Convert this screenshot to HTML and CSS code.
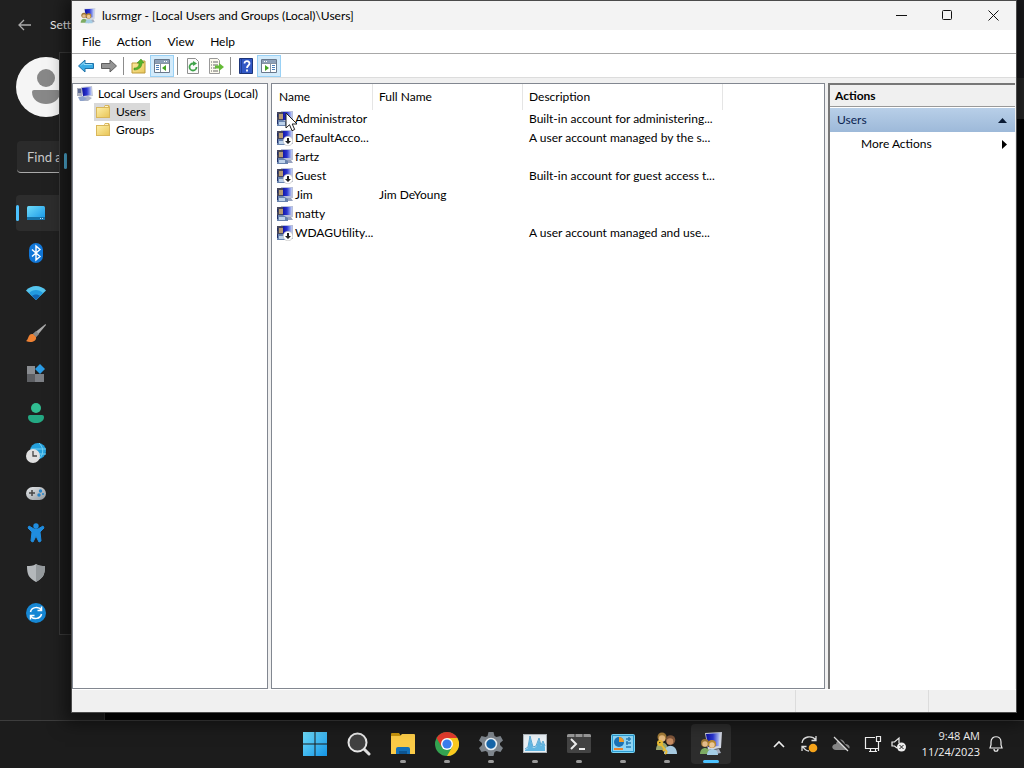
FILE: index.html
```html
<!DOCTYPE html>
<html lang="en">
<head>
    <meta charset="UTF-8">
    <meta name="viewport" content="width=device-width, initial-scale=1.0">
    <title>lusrmgr</title>
    <link rel="stylesheet" href="styles.css">
</head>
<body>
    <svg class="sprite" aria-hidden="true">
        <defs>
            <linearGradient id="gBlue" x1="0" y1="0" x2="1" y2="1"><stop offset="0" stop-color="#6fdcfa"/><stop offset="1" stop-color="#1494e6"/></linearGradient>
            <linearGradient id="gScreen" x1="0" y1="0" x2="1" y2="0"><stop offset="0" stop-color="#0d109c"/><stop offset=".5" stop-color="#2a35d0"/><stop offset="1" stop-color="#c4d4fa"/></linearGradient>
            <linearGradient id="gFolder" x1="0" y1="0" x2="1" y2="1"><stop offset="0" stop-color="#fdeea6"/><stop offset="1" stop-color="#e9c659"/></linearGradient>
            <linearGradient id="gSilver" x1="0" y1="0" x2="1" y2="1"><stop offset="0" stop-color="#e4e7ea"/><stop offset="1" stop-color="#92989d"/></linearGradient>
        </defs>
        <symbol id="computer" viewBox="0 0 16 16">
            <path d="M4 1l11-1 1 10-10 1z" fill="#c3c8d8"/>
            <path d="M5 2l9-1 .8 8L6 10z" fill="url(#gScreen)"/>
            <path d="M5 12l6-2 4 2-4 3H5z" fill="#aeb5c6"/>
            <path d="M0 2h5v8H0z" fill="#a9aebd"/>
            <path d="M1 3h3v4H1z" fill="#5d6a94"/>
            <path d="M1 11l5-1 4 3-4 2H3z" fill="#8ea3cc"/>
        </symbol>
        <symbol id="user" viewBox="0 0 16 16">
            <path d="M4 0h12v11H5z" fill="#b9c0da"/>
            <path d="M5 1h10l-1 8H6z" fill="url(#gScreen)"/>
            <path d="M8 11h6l2 3H8z" fill="#98a3bf"/>
            <path d="M0 1h6v8H0z" fill="#46475c"/>
            <path d="M2 3h4v5H2z" fill="#b69a72"/>
            <path d="M0 15V9h6l5 3v3z" fill="#6883ae"/>
            <path d="M2 11h6v3H2z" fill="#bdd2ea"/>
            <path d="M0 3h1v3H0zM0 9h1v4H0z" fill="#222f68"/>
        </symbol>
        <symbol id="user-off" viewBox="0 0 16 16">
            <use href="#user"/>
            <circle cx="11" cy="11" r="4.8" fill="#fff" stroke="#aaa" stroke-width=".5"/>
            <path d="M10 8h2v3h2l-3 3-3-3h2z" fill="#222"/>
        </symbol>
        <symbol id="group" viewBox="0 0 24 24">
            <path d="M6 1l17-1-1 16-13 2z" fill="#d0d5e2"/>
            <path d="M7 2l14-1-1 13-11 1z" fill="url(#gScreen)"/>
            <path d="M14 18l6-1 2 4-10 2z" fill="#a5adbd"/>
            <circle cx="6" cy="11" r="4" fill="#9a7435"/><circle cx="6" cy="12" r="2.7" fill="#e4bc8c"/>
            <path d="M1 22c0-8 10-8 10 0z" fill="#7dab62"/>
            <circle cx="13" cy="12" r="4" fill="#b8892f"/><circle cx="13" cy="13" r="2.7" fill="#ecc999"/>
            <path d="M8 23c0-8 11-8 11 0z" fill="#a5cde5"/>
        </symbol>
        <symbol id="folder" viewBox="0 0 16 16">
            <path d="M1 3h8l1-2h4l1 2v11H1z" fill="#d9b65a"/>
            <path d="M2 4h12v9H2z" fill="url(#gFolder)"/>
            <path d="M10 2h3v1h-3z" fill="#fff4c5"/>
        </symbol>
        <symbol id="pane" viewBox="0 0 16 14">
            <path d="M.5.5h15v13H.5z" fill="#fff" stroke="#69788b"/>
            <path d="M1 1h14v3H1z" fill="#8da0b8"/><path d="M10 2h1v1h-1zM12 2h1v1h-1z" fill="#fff"/>
            <path d="M6.500 4v9M1 4.500h14" stroke="#8794a3" fill="none"/>
            <path d="M2 6.500h3M2 8.500h3M2 10.500h3" stroke="#4c7fb8"/>
            <path d="M12 6v6L8 9z" fill="#43a523"/>
        </symbol>
    </svg>

    <div class="desktop">
        <div class="back-window"><div class="back-band"></div></div>

        <section class="settings">
            <header class="settings-head">
                <button aria-label="Back"><svg width="14" height="12" viewBox="0 0 14 12"><path d="M13 6H1M6 1L1 6l5 5" fill="none" stroke="#aaa" stroke-width="1.300"/></svg></button>
                <span>Sett</span>
            </header>
            <div class="avatar"><svg width="60" height="60" viewBox="0 0 60 60"><circle cx="30" cy="21" r="9" fill="#888"/><path d="M16 35q0-2 2-2h24q2 0 2 2c0 16-28 16-28 0z" fill="#888"/></svg></div>
            <input class="search" type="text" value="Find a" aria-label="Find a setting">
            <nav class="settings-nav">
                <a href="#" class="active" aria-label="System"><svg width="20" height="20" viewBox="0 0 20 20"><rect x="1" y="3" width="18" height="14" rx="1.500" fill="url(#gBlue)"/><path d="M1 14h18v1.500q0 1.500-1.500 1.500h-15Q1 17 1 15.500z" fill="#1572a8"/><path d="M14 15.500h1M16 15.500h1" stroke="#bdf"/></svg></a>
                <a href="#" aria-label="Bluetooth"><svg width="20" height="20" viewBox="0 0 20 20"><rect x="3" y="0" width="14" height="20" rx="7" fill="#1177d8"/><path d="M6 6.500l8 7-4 3.500V3l4 3.500-8 7" fill="none" stroke="#fff" stroke-width="1.400"/></svg></a>
                <a href="#" aria-label="Network"><svg width="20" height="20" viewBox="0 0 20 20"><path d="M0 7.500c5-6 15-6 20 0l-10 9.500z" fill="#55c5ee"/><path d="M3 10c4-4 10-4 14 0l-7 7z" fill="#229be0"/><path d="M6 13c2-2 6-2 8 0l-4 4z" fill="#1267b5"/></svg></a>
                <a href="#" aria-label="Personalization"><svg width="20" height="20" viewBox="0 0 20 20"><path d="M19.500 1L7 11l3 3L20 2z" fill="#aaa"/><path d="M10 8l-3 3 3 3 3-3z" fill="#888"/><path d="M7 11c-5-1-4 5-7 7 4 2 11 1 10-4z" fill="#ee8234"/></svg></a>
                <a href="#" aria-label="Apps"><svg width="20" height="20" viewBox="0 0 20 20"><path d="M1 3h8v8H1z" fill="#8a8d91"/><path d="M1 11h8v8H1z" fill="#5e6064"/><path d="M9 11h9v8H9z" fill="#7d8085"/><path d="M14 1l5 5-5 5-5-5z" fill="#2a9be4"/></svg></a>
                <a href="#" aria-label="Accounts"><svg width="20" height="20" viewBox="0 0 20 20"><circle cx="10" cy="5" r="5" fill="#30bd91"/><path d="M2 14q0-2 2-2h12q2 0 2 2c0 8-16 8-16 0z" fill="#24a983"/></svg></a>
                <a href="#" aria-label="Time"><svg width="20" height="20" viewBox="0 0 20 20"><circle cx="12" cy="8" r="8" fill="#24a0dc"/><path d="M5 6h15M6 11h14M13 0c5 5 5 11 0 16" fill="none" stroke="#75d0f2"/><circle cx="7" cy="13" r="7" fill="#e0e0e0"/><path d="M7 8v5h4" fill="none" stroke="#444" stroke-width="1.300"/></svg></a>
                <a href="#" aria-label="Gaming"><svg width="20" height="20" viewBox="0 0 20 20"><rect x="0" y="4" width="20" height="13" rx="6.500" fill="url(#gSilver)"/><path d="M6 7v6M3 10h6" stroke="#444" stroke-width="1.500"/><circle cx="14.500" cy="8" r="1.700" fill="#2784c8"/><circle cx="13" cy="12" r="1.700" fill="#2784c8"/><circle cx="17" cy="11" r="1" fill="#2784c8"/></svg></a>
                <a href="#" aria-label="Accessibility"><svg width="20" height="20" viewBox="0 0 20 20"><circle cx="10" cy="3" r="2.700" fill="#1f8de0"/><path d="M3 3l5 3h4l5-3 1 2-4 4 1 9-2 1-3-6-3 6-2-1 1-9-4-4z" fill="#1f8de0" stroke="#1f8de0"/></svg></a>
                <a href="#" aria-label="Privacy"><svg width="20" height="20" viewBox="0 0 20 20"><path d="M10 1c3 2 6 2 9 2 0 9-2 12-9 16C3 15 1 12 1 3c3 0 6 0 9-2z" fill="#b4b8bb"/><path d="M10 1c3 2 6 2 9 2 0 9-2 12-9 16z" fill="#94999c"/></svg></a>
                <a href="#" aria-label="Update"><svg width="20" height="20" viewBox="0 0 20 20"><circle cx="10" cy="10" r="10" fill="#1687d4"/><path d="M4.500 9c1-5 8-6 11-2M15.500 3.500V7.500h-4M15.500 11c-1 5-8 6-11 2M4.500 16.500v-4h4" fill="none" stroke="#fff" stroke-width="1.500"/></svg></a>
            </nav>
        </section>
        <div class="flyout"><div class="flyout-mark"></div></div>

        <main class="window">
            <header class="titlebar">
                <svg width="16" height="16"><use href="#group"/></svg>
                <h1>lusrmgr - [Local Users and Groups (Local)\Users]</h1>
                <div class="caption-btns">
                    <button aria-label="Minimize"><svg width="11" height="11"><path d="M0 5.500h11" stroke="#111"/></svg></button>
                    <button aria-label="Maximize"><svg width="11" height="11"><rect x=".5" y=".5" width="9" height="9" rx="1" fill="none" stroke="#111"/></svg></button>
                    <button aria-label="Close"><svg width="11" height="11"><path d="M.5.5l10 10M10.500.5l-10 10" stroke="#111"/></svg></button>
                </div>
            </header>
            <nav class="menubar">
                <button>File</button>
                <button>Action</button>
                <button>View</button>
                <button>Help</button>
            </nav>
            <div class="toolbar">
                <button aria-label="Back"><svg width="16" height="14" viewBox="0 0 16 14"><path d="M.5 7L7 1v3.500h8.500v5H7V13z" fill="#3aabe4" stroke="#2072a8"/><path d="M3 6.500l3-3v2h8" stroke="#96dcf8" fill="none"/></svg></button>
                <button aria-label="Forward"><svg width="16" height="14" viewBox="0 0 16 14"><path d="M15.500 7L9 1v3.500H.5v5H9V13z" fill="#949494" stroke="#5f5f5f"/></svg></button>
                <span class="sep"></span>
                <button aria-label="Up one level"><svg width="16" height="16" viewBox="0 0 16 16"><path d="M1 5h7l1-2h5v12H1z" fill="url(#gFolder)" stroke="#bd9a3b"/><path d="M3 10c4 0 5-2 5-5H6l4-4 3 4h-2c0 4-3 7-8 7z" fill="#55b52a" stroke="#3a871c" stroke-width=".5"/></svg></button>
                <button class="on" aria-label="Console tree"><svg width="16" height="14"><use href="#pane"/></svg></button>
                <span class="sep"></span>
                <button aria-label="Refresh"><svg width="16" height="16" viewBox="0 0 16 16"><path d="M2.500.5h8l3 3v12h-11z" fill="#fbfbfb" stroke="#909090"/><path d="M11.500 9A3.500 3.500 0 1 1 8 5.500" fill="none" stroke="#3fa34a" stroke-width="1.800"/><path d="M8 3l4 2.500L8 8z" fill="#3fa34a"/></svg></button>
                <button aria-label="Export list"><svg width="16" height="16" viewBox="0 0 16 16"><path d="M1.500.5h8l2 2v13h-10z" fill="#fcfaee" stroke="#999"/><path d="M3 4h1M3 7h1M3 10h1M3 13h1M5 4h5M5 7h5M5 10h3M5 13h5" stroke="#666"/><path d="M7 7.500h4V5l5 4-5 4v-2.500H7z" fill="#65bb37"/></svg></button>
                <span class="sep"></span>
                <button aria-label="Help"><svg width="14" height="16" viewBox="0 0 14 16"><path d="M.5.5h13v15H.5z" fill="#3158c5" stroke="#1d3578"/><path d="M2.500 1v14" stroke="#203f94"/><path d="M5.500 5.500c0-3.500 5-3 5 0 0 2-2.500 2-2.500 4.500M8 11.500v2" fill="none" stroke="#fff" stroke-width="1.800"/></svg></button>
                <button class="on" aria-label="Action pane"><svg class="flip" width="16" height="14"><use href="#pane"/></svg></button>
            </div>

            <div class="panes">
                <div class="tree">
                    <a href="#"><svg width="16" height="16"><use href="#computer"/></svg>Local Users and Groups (Local)</a>
                    <a href="#" class="leaf selected"><svg width="16" height="16"><use href="#folder"/></svg>Users</a>
                    <a href="#" class="leaf"><svg width="16" height="16"><use href="#folder"/></svg>Groups</a>
                </div>

                <div class="list">
                    <table>
                        <thead>
                            <tr><th class="col-name">Name</th><th class="col-full">Full Name</th><th class="col-desc">Description</th></tr>
                        </thead>
                        <tbody>
                            <tr><td><div class="name"><svg width="16" height="16"><use href="#user"/></svg>Administrator</div></td><td></td><td>Built-in account for administering...</td></tr>
                            <tr><td><div class="name"><svg width="16" height="16"><use href="#user-off"/></svg>DefaultAcco...</div></td><td></td><td>A user account managed by the s...</td></tr>
                            <tr><td><div class="name"><svg width="16" height="16"><use href="#user"/></svg>fartz</div></td><td></td><td></td></tr>
                            <tr><td><div class="name"><svg width="16" height="16"><use href="#user-off"/></svg>Guest</div></td><td></td><td>Built-in account for guest access t...</td></tr>
                            <tr><td><div class="name"><svg width="16" height="16"><use href="#user"/></svg>Jim</div></td><td>Jim DeYoung</td><td></td></tr>
                            <tr><td><div class="name"><svg width="16" height="16"><use href="#user"/></svg>matty</div></td><td></td><td></td></tr>
                            <tr><td><div class="name"><svg width="16" height="16"><use href="#user-off"/></svg>WDAGUtility...</div></td><td></td><td>A user account managed and use...</td></tr>
                        </tbody>
                    </table>
                </div>

                <aside class="actions">
                    <h2>Actions</h2>
                    <button class="group">Users<svg width="9" height="5"><path d="M0 5l4.500-5L9 5z" fill="#0a1a33"/></svg></button>
                    <button class="more">More Actions<svg width="5" height="9"><path d="M0 0l5 4.500L0 9z" fill="#000"/></svg></button>
                </aside>
            </div>
            <footer class="status"><span></span><span></span><span></span></footer>
        </main>

        <svg class="cursor" width="13" height="20" viewBox="0 0 13 20"><path d="M1 1v15l3.500-3.300 2.500 6 2.700-1.200L7.200 12H12z" fill="#fff" stroke="#222"/></svg>
    </div>

    <footer class="taskbar">
        <div class="apps">
            <button aria-label="Start"><svg width="24" height="24" viewBox="0 0 24 24"><path d="M0 0h11.500v11.500H0zM12.500 0H24v11.500H12.500zM0 12.500h11.500V24H0zM12.500 12.500H24V24H12.500z" fill="url(#gBlue)"/></svg></button>
            <button aria-label="Search"><svg width="24" height="24" viewBox="0 0 24 24"><path d="M16 16l6 6" stroke="#ddd" stroke-width="3" stroke-linecap="round"/><circle cx="10.500" cy="10.500" r="9" fill="#414141" stroke="#e6e6e6" stroke-width="2"/></svg></button>
            <button class="open" aria-label="File Explorer"><svg width="24" height="24" viewBox="0 0 24 24"><path d="M0 2q0-1 1-1h7l2 3H0z" fill="#c8940c"/><path d="M0 4h9l2-2h12q1 0 1 1v19H0z" fill="#fbcb47"/><path d="M5 22v-5q0-2 2-2h10q2 0 2 2v5z" fill="#1470b8"/><path d="M8 19h8v3H8z" fill="#0d5592"/></svg></button>
            <button class="open" aria-label="Chrome"><svg width="24" height="24" viewBox="0 0 24 24"><circle cx="12" cy="12" r="12" fill="#34a351"/><path d="M1.600 6A12 12 0 0 1 22.400 6L12 6 12 12 6.800 15z" fill="#e33b2e"/><path d="M22.400 6A12 12 0 0 1 12 24l5.200-9L12 6z" fill="#fbc91e"/><circle cx="12" cy="12" r="6" fill="#fff"/><circle cx="12" cy="12" r="4.600" fill="#3b7ded"/></svg></button>
            <button class="open" aria-label="Settings"><svg width="24" height="24" viewBox="0 0 24 24"><path d="M9.500 0h5l1 4 2 1 4-1L24 8.500 21 11v2l3 3-2.500 4-4-1-2 1-1 4h-5l-1-4-2-1-4 1L0 16l3-3v-2L0 8.500 2.500 4l4 1 2-1z" fill="#7e858c"/><circle cx="12" cy="12" r="5.500" fill="#1665a8" stroke="#e6edf2" stroke-width="1.600"/></svg></button>
            <button class="open" aria-label="Resource Monitor"><svg width="24" height="24" viewBox="0 0 24 24"><rect x=".5" y="2.500" width="23" height="18" fill="#e9f0f5" stroke="#aeb5ba"/><path d="M2 18l3-2 2-11 3 11 3-1 3-8 2 7 2-4 2 5v4H2z" fill="#61b6e2"/><path d="M2 17l3-2 2-11 3 11 3-1 3-8 2 7 2-4 2 5" fill="none" stroke="#58a8d4"/></svg></button>
            <button class="open" aria-label="Terminal"><svg width="24" height="24" viewBox="0 0 24 24"><rect y="2" width="24" height="19" rx="1.500" fill="#434343"/><path d="M0 5V3.500Q0 2 1.500 2h21Q24 2 24 3.500V5z" fill="#9a9a9a"/><path d="M8 2v3M16 2v3" stroke="#333"/><path d="M4 7l5 5-5 5" fill="none" stroke="#eee" stroke-width="2"/><path d="M12 17h6" stroke="#eee" stroke-width="2"/></svg></button>
            <button class="open" aria-label="Control Panel"><svg width="24" height="24" viewBox="0 0 24 24"><rect x=".5" y="2.500" width="23" height="18" rx="1" fill="#2d9cd2" stroke="#7cd5f4"/><rect x="2" y="4" width="20" height="15" fill="#8fd5f4"/><circle cx="8" cy="10" r="5" fill="#1b72b5"/><path d="M8 10V5a5 5 0 0 1 5 5z" fill="#f39b25"/><path d="M15 7h5M15 11h5M15 15h5M18 5v4M16 9v4" stroke="#2a7db5" stroke-width="1.500"/><path d="M3 17h9" stroke="#e9842f" stroke-width="2"/></svg></button>
            <button class="open" aria-label="User Accounts"><svg width="24" height="24" viewBox="0 0 24 24"><circle cx="7" cy="5" r="4.500" fill="#a37c38"/><circle cx="7" cy="6.500" r="3.200" fill="#e6bb80"/><path d="M1 18c0-10 12-10 12 0z" fill="#9aa872"/><circle cx="15.500" cy="8" r="4.800" fill="#7e553a"/><circle cx="15" cy="9.500" r="3.300" fill="#c78d62"/><path d="M9 22c0-11 13-11 13 0z" fill="#a6c9df"/><path d="M5 11l7 9M10 17l-2 2M12 20l-2 2" fill="none" stroke="#e9bb31" stroke-width="2"/><circle cx="5" cy="11" r="2" fill="none" stroke="#e9bb31" stroke-width="2"/></svg></button>
            <button class="open current" aria-label="Local Users and Groups"><svg width="24" height="24"><use href="#group"/></svg></button>
        </div>
        <div class="tray">
            <button class="spaced" aria-label="Show hidden icons"><svg width="14" height="16" viewBox="0 0 14 16"><path d="M2 11l5-5 5 5" fill="none" stroke="#eee" stroke-width="1.600"/></svg></button>
            <button class="spaced" aria-label="Sync"><svg width="18" height="18" viewBox="0 0 18 18"><path d="M2 8c1-7 10-8 14-3M16 1v4.500h-4.500M2 16v-4.500h4.500M3 12c2 3 4 4 6 4" fill="none" stroke="#ddd" stroke-width="1.300"/><circle cx="13" cy="13" r="4.300" fill="#f5a31a"/></svg></button>
            <button class="spaced" aria-label="OneDrive"><svg width="18" height="18" viewBox="0 0 18 18"><path d="M4 15c-5 0-5-6 0-6 1-6 8-6 9 0 6 0 6 6 1 6z" fill="#858585"/><path d="M3 1l14 14" stroke="#1c1c1c" stroke-width="2"/><path d="M2 2l14 14" stroke="#ddd" stroke-width="1.200"/></svg></button>
            <button aria-label="Network"><svg width="18" height="18" viewBox="0 0 18 18"><path d="M11 2.500H1.500v11h13V9M5 16.500h8M6.500 14v2M11.500 14v2M12.500 1.500h4v5h-4zM14.500 7v9" fill="none" stroke="#eee" stroke-width="1.200"/></svg></button>
            <button aria-label="Volume"><svg width="18" height="18" viewBox="0 0 18 18"><path d="M7 13L4.500 11H2V7h2.500L9 3v5" fill="none" stroke="#eee" stroke-width="1.200"/><circle cx="11.500" cy="12" r="4.500" fill="#eee"/><path d="M9.500 10l4 4M13.500 10l-4 4" stroke="#222"/></svg></button>
            <button class="clock">9:48 AM<br>11/24/2023</button>
            <button aria-label="Notifications"><svg width="16" height="18" viewBox="0 0 16 18"><path d="M2 13l1-3V7c0-7 10-7 10 0v3l1 3zM6 14c0 3 4 3 4 0" fill="none" stroke="#eee" stroke-width="1.200"/></svg></button>
        </div>
    </footer>
</body>
</html>
```

FILE: styles.css
```css
* {
    box-sizing: border-box;
}
body {
    margin: 0;
    height: 100vh;
    display: flex;
    flex-direction: column;
    overflow: hidden;
    background-color: #000;
    color: #000;
    font-family: Lato, "Open Sans", sans-serif;
    font-size: 12px;
    line-height: 18px;
}
button {
    border: 0;
    padding: 0;
    background: none;
    color: inherit;
    font: inherit;
}
a {
    color: inherit;
    text-decoration: none;
}
svg {
    display: block;
    flex: none;
}
.sprite {
    position: absolute;
    width: 0;
    height: 0;
}
.desktop {
    position: relative;
    flex: 1;
    background-color: #030303;
}

/* windows on the desktop */
.back-window {
    position: absolute;
    top: 0;
    right: 0;
    width: 40px;
    height: 119px;
    padding-top: 78px;
    background-color: #1b1b1e;
}
.back-band {
    height: 41px;
    background-color: #2b2b2b;
}
.settings {
    position: absolute;
    top: 0;
    bottom: 0;
    left: 0;
    width: 105px;
    padding-left: 16px;
    background-color: #202020;
    border-right: 1px solid #333;
    color: #eee;
}
.settings-head {
    display: flex;
    align-items: center;
    gap: 18px;
    height: 50px;
    padding-left: 2px;
}
.avatar {
    width: 60px;
    height: 60px;
    margin-top: 7px;
    border-radius: 50%;
    background-color: #f5f5f5;
}
.search {
    display: block;
    width: 80px;
    height: 32px;
    margin: 24px 0 22px 1px;
    padding: 0 10px;
    border: 0;
    border-bottom: 1px solid #aaa;
    border-radius: 4px;
    background-color: #2b2b2b;
    color: #c8c8c8;
    font: inherit;
    font-size: 13px;
}
.settings-nav a {
    display: flex;
    align-items: center;
    height: 36px;
    margin-bottom: 4px;
    padding-left: 10px;
    border-radius: 4px;
}
.settings-nav .active {
    padding-left: 0;
    background-color: #2d2d2d;
}
.settings-nav .active::before {
    content: "";
    width: 3px;
    height: 16px;
    margin-right: 7px;
    border-radius: 2px;
    background-color: #4cc2ff;
}
.flyout {
    position: absolute;
    top: 52px;
    left: 59px;
    width: 40px;
    height: 583px;
    padding: 100px 0 0 4px;
    border: 1px solid #3a3a3a;
    background-color: #1c1c1c;
}
.flyout-mark {
    width: 3px;
    height: 16px;
    border-radius: 2px;
    background-color: #4ca9d0;
}
.window {
    position: absolute;
    top: 0;
    right: 7px;
    bottom: 7px;
    left: 71px;
    display: flex;
    flex-direction: column;
    border: 1px solid #4b4b4b;
    background-color: #f0f0f0;
    box-shadow: 0 4px 16px 6px rgba(0, 0, 0, 0.5);
}

.titlebar {
    display: flex;
    align-items: center;
    gap: 6px;
    height: 29px;
    padding-left: 8px;
    background-color: #f3f3f3;
}
.titlebar h1 {
    margin: 0;
    font-size: 12px;
    font-weight: normal;
}
.caption-btns {
    display: flex;
    margin-left: auto;
    align-self: stretch;
}
.caption-btns button {
    display: flex;
    align-items: center;
    justify-content: center;
    width: 46px;
}
.menubar {
    display: flex;
    gap: 16px;
    height: 24px;
    padding-left: 10px;
    border-bottom: 1px solid #a8a8a8;
    background-color: #fff;
}
.toolbar {
    display: flex;
    align-items: center;
    height: 24px;
    padding-left: 2px;
    border-bottom: 1px solid #dcdcdc;
    background-color: #fff;
}
.toolbar button {
    display: flex;
    align-items: center;
    justify-content: center;
    width: 23px;
    height: 22px;
}
.toolbar .on {
    width: 24px;
    border: 1px solid #99d1f5;
    background-color: #d3ebfb;
}
.toolbar .sep {
    width: 1px;
    height: 18px;
    margin: 0 3px;
    background-color: #8c8c8c;
}
.flip {
    transform: scaleX(-1);
}

.panes {
    flex: 1;
    display: grid;
    grid-template-columns: 196px 1fr 187px;
    gap: 3px;
    padding: 5px 1px 0 0;
}
.tree,
.list {
    border: 1px solid #828790;
    background-color: #fff;
}
.tree {
    display: flex;
    flex-direction: column;
    align-items: flex-start;
    padding: 1px 4px;
}
.tree a {
    display: flex;
    align-items: center;
    gap: 5px;
    height: 18px;
    white-space: nowrap;
}
.tree .leaf {
    margin-left: 17px;
    padding: 0 4px 0 1px;
}
.tree .selected {
    background-color: #d9d9d9;
}
.list table {
    border-collapse: separate;
    border-spacing: 0;
    table-layout: fixed;
    width: 451px;
}
.list th {
    height: 26px;
    padding: 0 7px;
    border-right: 1px solid #e5e5e5;
    text-align: left;
    font-weight: normal;
}
.list td {
    height: 19px;
    padding: 0 7px 1px;
    white-space: nowrap;
}
.list td:first-child {
    padding: 0 0 1px 5px;
}
.col-name {
    width: 101px;
}
.col-full,
.list .col-desc {
    padding-left: 6px;
}
.list td + td,
.list th + th {
    padding-left: 6px;
}
.col-full {
    width: 150px;
}
.col-desc {
    width: 200px;
}
.name {
    display: flex;
    align-items: center;
    gap: 2px;
}

.actions {
    display: flex;
    flex-direction: column;
    border: solid #777;
    border-width: 2px 0 0 2px;
    background-color: #fff;
}
.actions h2 {
    margin: 0 0 1px;
    padding: 2px 5px 1px;
    border-bottom: 1px solid #999;
    background-color: #f0f0f0;
    font-size: 12px;
    font-weight: bold;
}
.actions button {
    display: flex;
    align-items: center;
    justify-content: space-between;
    height: 24px;
    padding: 0 8px 0 7px;
}
.actions .group {
    background-image: linear-gradient(#b8cfe8, #9db9d9);
    color: #0a2350;
}
.actions .more {
    padding-left: 31px;
}
.status {
    display: flex;
    justify-content: flex-end;
    height: 23px;
    border-top: 1px solid #fff;
}
.status span {
    border-left: 1px solid #dcdcdc;
    width: 133px;
}
.status span:first-child {
    flex: 1;
    border: 0;
}
.status span:last-child {
    width: 88px;
}
.cursor {
    position: absolute;
    top: 112px;
    left: 285px;
}

.taskbar {
    display: grid;
    grid-template-columns: 1fr auto 1fr;
    height: 48px;
    padding-left: 2px;
    border-top: 1px solid #3d3d3d;
    background-color: #1c1c1c;
    color: #f2f2f2;
}
.apps {
    grid-column: 2;
    display: flex;
    align-items: center;
    gap: 4px;
    padding-bottom: 1px;
}
.apps button {
    display: flex;
    flex-direction: column;
    align-items: center;
    width: 40px;
    height: 40px;
    padding-top: 8px;
    border-radius: 4px;
}
.apps .open::after {
    content: "";
    width: 6px;
    height: 3px;
    margin-top: 4px;
    border-radius: 2px;
    background-color: #9a9a9a;
}
.apps .current {
    background-color: #2d2d2d;
}
.apps .current::after {
    width: 16px;
    background-color: #4cc2ff;
}
.tray {
    display: flex;
    align-items: center;
    justify-content: flex-end;
    gap: 8px;
    padding: 0 20px 1px 0;
}
.tray .spaced {
    margin-right: 6px;
}
.tray .clock {
    margin-left: 6px;
    font-family: "Open Sans", sans-serif;
    font-size: 11px;
    line-height: 16px;
    text-align: right;
}
```
